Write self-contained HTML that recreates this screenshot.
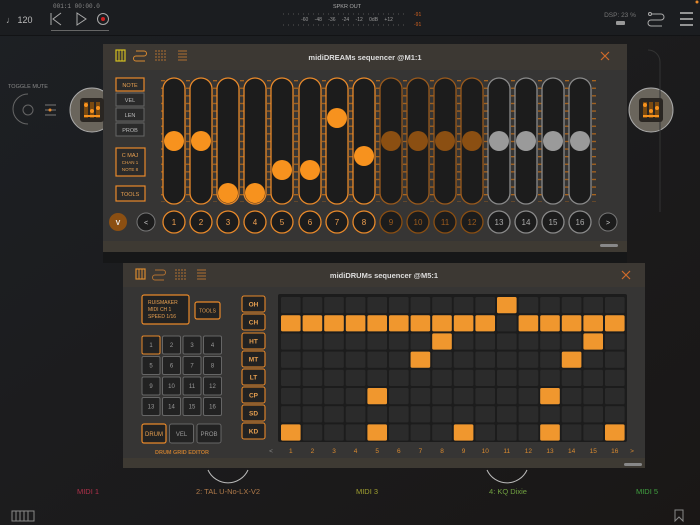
<!DOCTYPE html>
<html><head><meta charset="utf-8"><style>
html,body{margin:0;padding:0;background:#1a1c1f;}
svg{display:block;font-family:"Liberation Sans",sans-serif;}
</style></head><body>
<svg width="700" height="525" viewBox="0 0 700 525" xmlns="http://www.w3.org/2000/svg">
<defs>
<linearGradient id="bg" x1="0" y1="0" x2="1" y2="1">
<stop offset="0" stop-color="#1d2024"/><stop offset="1" stop-color="#1a1716"/></linearGradient>
<pattern id="lad" x="0" y="80" width="6" height="7.6" patternUnits="userSpaceOnUse">
<rect x="0" y="0" width="6" height="1.3" fill="#a8641e"/></pattern>
<pattern id="ladg" x="0" y="80" width="6" height="7.6" patternUnits="userSpaceOnUse">
<rect x="0" y="0" width="6" height="1.3" fill="#8a5a2a"/></pattern>
<pattern id="cells" x="280" y="296" width="21.6" height="18.2" patternUnits="userSpaceOnUse">
<rect x="1" y="1" width="19.6" height="16.2" rx="1.5" fill="#2b2b2b"/></pattern>
</defs>
<rect width="700" height="525" fill="url(#bg)"/>
<!-- top bar -->
<rect width="700" height="35" fill="#1b1d20"/>
<rect y="35" width="700" height="1" fill="#121315"/>
<text x="6" y="23" font-size="9" fill="#bbb">♩ 120</text>
<text x="53" y="8" font-size="6" fill="#888" font-family="Liberation Mono">001:1  00:00.0</text>
<path d="M51 13v12M61 13l-8 6 8 6" stroke="#aaa" fill="none" stroke-width="1"/>
<path d="M77 13v12l9-6z" stroke="#aaa" fill="none"/>
<circle cx="103" cy="19" r="5.5" stroke="#aaa" fill="none"/><circle cx="103" cy="19" r="2" fill="#d02020"/>
<rect x="51" y="30" width="58" height="1" fill="#666"/>
<text x="347" y="8" font-size="5.5" fill="#aaa" text-anchor="middle">SPKR OUT</text>
<line x1="283" y1="14" x2="407" y2="14" stroke="#555" stroke-dasharray="1 4"/>
<line x1="283" y1="25" x2="407" y2="25" stroke="#555" stroke-dasharray="1 4"/>
<text x="347" y="21" font-size="5" fill="#999" text-anchor="middle" word-spacing="5">-60 -48 -36 -24 -12 0dB +12</text>
<text x="414" y="16" font-size="5" fill="#d06020">-91</text><text x="414" y="26" font-size="5" fill="#d06020">-91</text>
<text x="620" y="17" font-size="6.5" fill="#777" text-anchor="middle">DSP: 23 %</text>
<rect x="616" y="21" width="9" height="4" rx="1" fill="#999"/>
<circle cx="697" cy="2" r="1.5" fill="#e8892a"/>
<path d="M651 14h10a3 3 0 0 1 0 6h-10a3 3 0 0 0 0 6h11" stroke="#aaa" fill="none"/><circle cx="650" cy="14" r="1.5" stroke="#aaa" fill="none"/>
<path d="M680 13h13M680 19h13M680 25h13" stroke="#bbb" stroke-width="1.5"/>
<!-- left toggle mute -->
<text x="28" y="88" font-size="5.5" fill="#888" text-anchor="middle">TOGGLE MUTE</text>
<path d="M28 94a15 15 0 0 0 0 30" stroke="#666" fill="none"/>
<circle cx="28" cy="110" r="5" stroke="#666" fill="none"/>
<path d="M45 105h11M45 110h11M45 115h11" stroke="#777"/><circle cx="50" cy="110" r="1.5" fill="#e8892a"/>
<circle cx="92" cy="110" r="22" fill="#6a655c" stroke="#aaa"/>
<circle cx="651" cy="110" r="22" fill="#6a655c" stroke="#aaa"/>
<path d="M633 25a12 12 0 0 1 0 0M648 50a12 12 0 0 1 12 12v150" stroke="#333" fill="none"/>
<!-- strip between panels -->
<rect x="103" y="252" width="524" height="11" fill="#161718"/>
<!-- PANEL 1 -->
<rect x="103" y="44" width="524" height="208" fill="#363534"/>
<rect x="103" y="44" width="524" height="26" fill="#3c3833"/>
<rect x="103" y="241" width="524" height="11" fill="#3e3a33"/>
<rect x="600" y="244" width="18" height="3" rx="1.5" fill="#888"/>
<rect x="116" y="50" width="9" height="11" fill="none" stroke="#d4c020" stroke-width="1.2"/><path d="M119 50v11M122 50v11" stroke="#d4c020"/>
<path d="M136 51h8a2.5 2.5 0 0 1 0 5h-8a2.5 2.5 0 0 0 0 5h9" stroke="#d98a30" fill="none"/>
<path d="M156 50v11M159 50v11M162 50v11M165 50v11" stroke="#b07030" stroke-dasharray="2 1"/>
<path d="M178 51h9M178 54h9M178 57h9M178 60h9" stroke="#b07030"/>
<text x="365" y="60" font-size="7.5" font-weight="bold" fill="#ddd" text-anchor="middle">midiDREAMs sequencer @M1:1</text>
<path d="M601 52l8 8M609 52l-8 8" stroke="#d06a2a" stroke-width="1.2"/>
<g font-size="5.5" text-anchor="middle" fill="#bbb">
<rect x="116" y="78" width="28" height="13" fill="#2a2a2a" stroke="#e8892a" stroke-width="1.2"/><text x="130" y="87" fill="#e8a050">NOTE</text>
<rect x="116" y="93" width="28" height="13" fill="#2a2a2a" stroke="#666"/><text x="130" y="102">VEL</text>
<rect x="116" y="108" width="28" height="13" fill="#2a2a2a" stroke="#666"/><text x="130" y="117">LEN</text>
<rect x="116" y="123" width="28" height="13" fill="#2a2a2a" stroke="#666"/><text x="130" y="132">PROB</text>
<rect x="116" y="148" width="29" height="28" fill="#2a2a2a" stroke="#e8892a" stroke-width="1.2"/>
<text x="130" y="157" fill="#e8a050">C MAJ</text><text x="130" y="164" font-size="4.5" fill="#e8a050">CHAN 1</text><text x="130" y="171" font-size="4.5" fill="#e8a050">NOTE 8</text>
<rect x="116" y="186" width="29" height="15" fill="#2a2a2a" stroke="#e8892a" stroke-width="1.2"/><text x="130" y="196" fill="#e8a050">TOOLS</text>
</g>
<!-- ladders -->
<g>
<rect x="161" y="80" width="4" height="122" fill="url(#lad)"/>
<rect x="186" y="80" width="4" height="122" fill="url(#lad)"/><rect x="213" y="80" width="4" height="122" fill="url(#lad)"/><rect x="240" y="80" width="4" height="122" fill="url(#lad)"/><rect x="267" y="80" width="4" height="122" fill="url(#lad)"/><rect x="294" y="80" width="4" height="122" fill="url(#lad)"/><rect x="322" y="80" width="4" height="122" fill="url(#lad)"/><rect x="349" y="80" width="4" height="122" fill="url(#lad)"/><rect x="376" y="80" width="4" height="122" fill="url(#lad)"/><rect x="403" y="80" width="4" height="122" fill="url(#lad)"/><rect x="430" y="80" width="4" height="122" fill="url(#lad)"/><rect x="457" y="80" width="4" height="122" fill="url(#lad)"/><rect x="484" y="80" width="4" height="122" fill="url(#lad)"/><rect x="511" y="80" width="4" height="122" fill="url(#lad)"/><rect x="538" y="80" width="4" height="122" fill="url(#lad)"/><rect x="565" y="80" width="4" height="122" fill="url(#lad)"/><rect x="592" y="80" width="4" height="122" fill="url(#lad)"/>
</g>
<g fill="#1c1c1c" stroke-width="1.3">
<g stroke="#e8892a">
<rect x="163" y="78" width="22" height="126" rx="11"/><rect x="190" y="78" width="22" height="126" rx="11"/><rect x="217" y="78" width="22" height="126" rx="11"/><rect x="244" y="78" width="22" height="126" rx="11"/><rect x="271" y="78" width="22" height="126" rx="11"/><rect x="299" y="78" width="22" height="126" rx="11"/><rect x="326" y="78" width="22" height="126" rx="11"/><rect x="353" y="78" width="22" height="126" rx="11"/>
</g>
<g stroke="#9a5a1c">
<rect x="380" y="78" width="22" height="126" rx="11"/><rect x="407" y="78" width="22" height="126" rx="11"/><rect x="434" y="78" width="22" height="126" rx="11"/><rect x="461" y="78" width="22" height="126" rx="11"/>
</g>
<g stroke="#8a8a8a">
<rect x="488" y="78" width="22" height="126" rx="11"/><rect x="515" y="78" width="22" height="126" rx="11"/><rect x="542" y="78" width="22" height="126" rx="11"/><rect x="569" y="78" width="22" height="126" rx="11"/>
</g>
</g>
<g fill="#f7921e">
<circle cx="174" cy="141" r="10"/><circle cx="201" cy="141" r="10"/><circle cx="228" cy="193" r="10"/><circle cx="255" cy="193" r="10"/><circle cx="282" cy="170" r="10"/><circle cx="310" cy="170" r="10"/><circle cx="337" cy="118" r="10"/><circle cx="364" cy="156" r="10"/>
</g>
<g fill="#8b4f12"><circle cx="391" cy="141" r="10"/><circle cx="418" cy="141" r="10"/><circle cx="445" cy="141" r="10"/><circle cx="472" cy="141" r="10"/></g>
<g fill="#9a9a9a"><circle cx="499" cy="141" r="10"/><circle cx="526" cy="141" r="10"/><circle cx="553" cy="141" r="10"/><circle cx="580" cy="141" r="10"/></g>
<circle cx="118" cy="222" r="9" fill="#8b4f12"/><text x="118" y="225" font-size="7" fill="#eee" text-anchor="middle" font-weight="bold">V</text>
<circle cx="146" cy="222" r="9" fill="#1c1c1c" stroke="#777"/><text x="146" y="225" font-size="7" fill="#ccc" text-anchor="middle">&lt;</text>
<circle cx="608" cy="222" r="9" fill="#1c1c1c" stroke="#777"/><text x="608" y="225" font-size="7" fill="#ccc" text-anchor="middle">&gt;</text>
<g font-size="8" text-anchor="middle" fill="#1c1c1c" stroke-width="1.3">
<g stroke="#e8892a"><circle cx="174" cy="222" r="11"/><circle cx="201" cy="222" r="11"/><circle cx="228" cy="222" r="11"/><circle cx="255" cy="222" r="11"/><circle cx="282" cy="222" r="11"/><circle cx="310" cy="222" r="11"/><circle cx="337" cy="222" r="11"/><circle cx="364" cy="222" r="11"/></g>
<g stroke="#8b4f12"><circle cx="391" cy="222" r="11"/><circle cx="418" cy="222" r="11"/><circle cx="445" cy="222" r="11"/><circle cx="472" cy="222" r="11"/></g>
<g stroke="#8a8a8a"><circle cx="499" cy="222" r="11"/><circle cx="526" cy="222" r="11"/><circle cx="553" cy="222" r="11"/><circle cx="580" cy="222" r="11"/></g>
</g>
<g font-size="8" text-anchor="middle">
<g fill="#f0a050"><text x="174" y="225">1</text><text x="201" y="225">2</text><text x="228" y="225">3</text><text x="255" y="225">4</text><text x="282" y="225">5</text><text x="310" y="225">6</text><text x="337" y="225">7</text><text x="364" y="225">8</text></g>
<g fill="#9a5a1c"><text x="391" y="225">9</text><text x="418" y="225">10</text><text x="445" y="225">11</text><text x="472" y="225">12</text></g>
<g fill="#aaa"><text x="499" y="225">13</text><text x="526" y="225">14</text><text x="553" y="225">15</text><text x="580" y="225">16</text></g>
</g>
<!-- icons inside side circles -->
<g transform="translate(80,98)"><rect width="24" height="24" rx="3" fill="#2a2622"/><rect x="4" y="4" width="4" height="16" fill="#7a4a10"/><rect x="10" y="4" width="4" height="16" fill="#7a4a10"/><rect x="16" y="4" width="4" height="16" fill="#7a4a10"/><circle cx="6" cy="7" r="2" fill="#f7921e"/><circle cx="12" cy="13" r="2" fill="#f7921e"/><circle cx="18" cy="10" r="2" fill="#f7921e"/><rect x="4" y="17" width="16" height="2" fill="#f7921e"/></g>
<g transform="translate(639,98)"><rect width="24" height="24" rx="3" fill="#2a2622"/><rect x="4" y="4" width="4" height="16" fill="#7a4a10"/><rect x="10" y="4" width="4" height="16" fill="#7a4a10"/><rect x="16" y="4" width="4" height="16" fill="#7a4a10"/><circle cx="6" cy="7" r="2" fill="#f7921e"/><circle cx="12" cy="13" r="2" fill="#f7921e"/><circle cx="18" cy="10" r="2" fill="#f7921e"/><rect x="4" y="17" width="16" height="2" fill="#f7921e"/></g>
<!-- PANEL 2 -->
<rect x="123" y="263" width="522" height="205" fill="#363534"/>
<rect x="123" y="263" width="522" height="24" fill="#3c3833"/>
<rect x="123" y="458" width="522" height="10" fill="#3e3a33"/>
<rect x="624" y="463" width="18" height="3" rx="1.5" fill="#888"/>
<rect x="136" y="269" width="9" height="10" fill="none" stroke="#d98a30" stroke-width="1.2"/><path d="M139 269v10M142 269v10" stroke="#d98a30"/>
<path d="M155 270h8a2.5 2.5 0 0 1 0 5h-8a2.5 2.5 0 0 0 0 5h9" stroke="#b07030" fill="none"/>
<path d="M176 269v11M179 269v11M182 269v11M185 269v11" stroke="#b07030" stroke-dasharray="2 1"/>
<path d="M197 270h9M197 273h9M197 276h9M197 279h9" stroke="#b07030"/>
<text x="384" y="278" font-size="7.5" font-weight="bold" fill="#ddd" text-anchor="middle">midiDRUMs sequencer @M5:1</text>
<path d="M622 271l8 8M630 271l-8 8" stroke="#d06a2a" stroke-width="1.2"/>
<g font-size="5" text-anchor="middle">
<rect x="142" y="295" width="47" height="29" rx="2" fill="#222" stroke="#e8892a" stroke-width="1.2"/>
<g fill="#e8a050" text-anchor="start"><text x="148" y="304">RUISMAKER</text><text x="148" y="311">MIDI CH 1</text><text x="148" y="318">SPEED 1/16</text></g>
<rect x="195" y="302" width="25" height="17" rx="2" fill="#222" stroke="#e8892a" stroke-width="1.2"/><text x="207.5" y="312.5" fill="#e8a050">TOOLS</text>
</g>
<g font-size="6" text-anchor="middle" fill="#999">
<g fill="#222" stroke="#666">
<rect x="142" y="336" width="18" height="18" rx="1.5" stroke="#e8892a"/><rect x="162.5" y="336" width="18" height="18" rx="1.5"/><rect x="183" y="336" width="18" height="18" rx="1.5"/><rect x="203.5" y="336" width="18" height="18" rx="1.5"/>
<rect x="142" y="356.5" width="18" height="18" rx="1.5"/><rect x="162.5" y="356.5" width="18" height="18" rx="1.5"/><rect x="183" y="356.5" width="18" height="18" rx="1.5"/><rect x="203.5" y="356.5" width="18" height="18" rx="1.5"/>
<rect x="142" y="377" width="18" height="18" rx="1.5"/><rect x="162.5" y="377" width="18" height="18" rx="1.5"/><rect x="183" y="377" width="18" height="18" rx="1.5"/><rect x="203.5" y="377" width="18" height="18" rx="1.5"/>
<rect x="142" y="397.5" width="18" height="18" rx="1.5"/><rect x="162.5" y="397.5" width="18" height="18" rx="1.5"/><rect x="183" y="397.5" width="18" height="18" rx="1.5"/><rect x="203.5" y="397.5" width="18" height="18" rx="1.5"/>
</g>
<text x="151" y="347">1</text><text x="171.5" y="347">2</text><text x="192" y="347">3</text><text x="212.5" y="347">4</text>
<text x="151" y="367.5">5</text><text x="171.5" y="367.5">6</text><text x="192" y="367.5">7</text><text x="212.5" y="367.5">8</text>
<text x="151" y="388">9</text><text x="171.5" y="388">10</text><text x="192" y="388">11</text><text x="212.5" y="388">12</text>
<text x="151" y="408.5">13</text><text x="171.5" y="408.5">14</text><text x="192" y="408.5">15</text><text x="212.5" y="408.5">16</text>
<rect x="142" y="424" width="24" height="19" rx="2" fill="#222" stroke="#e8892a" stroke-width="1.2"/><text x="154" y="436" fill="#e8a050">DRUM</text>
<rect x="169.5" y="424" width="24" height="19" rx="2" fill="#222" stroke="#666"/><text x="181.5" y="436">VEL</text>
<rect x="197" y="424" width="24" height="19" rx="2" fill="#222" stroke="#666"/><text x="209" y="436">PROB</text>
<text x="182" y="454" font-size="5.5" fill="#c07a30" font-weight="bold">DRUM GRID EDITOR</text>
</g>
<g font-size="6.5" text-anchor="middle" fill="#e8a050" font-weight="bold">
<g fill="#222" stroke="#e8892a" stroke-width="1.1">
<rect x="242" y="296" width="23" height="16" rx="2"/><rect x="242" y="314" width="23" height="16" rx="2"/><rect x="242" y="333" width="23" height="16" rx="2"/><rect x="242" y="351" width="23" height="16" rx="2"/><rect x="242" y="369" width="23" height="16" rx="2"/><rect x="242" y="387" width="23" height="16" rx="2"/><rect x="242" y="405" width="23" height="16" rx="2"/><rect x="242" y="423" width="23" height="16" rx="2"/>
</g>
<text x="253.5" y="306.5">OH</text><text x="253.5" y="324.5">CH</text><text x="253.5" y="343.5">HT</text><text x="253.5" y="361.5">MT</text><text x="253.5" y="379.5">LT</text><text x="253.5" y="397.5">CP</text><text x="253.5" y="415.5">SD</text><text x="253.5" y="433.5">KD</text>
</g>
<rect x="278" y="294" width="349" height="148" rx="2" fill="#1c1c1c"/>
<rect x="280" y="296" width="345.6" height="145.6" fill="url(#cells)"/>
<g fill="#f0972e">
<rect x="497" y="297" width="19.6" height="16.2" rx="1.5"/>
<rect x="281" y="315.2" width="19.6" height="16.2" rx="1.5"/><rect x="302.6" y="315.2" width="19.6" height="16.2" rx="1.5"/><rect x="324.2" y="315.2" width="19.6" height="16.2" rx="1.5"/><rect x="345.8" y="315.2" width="19.6" height="16.2" rx="1.5"/><rect x="367.4" y="315.2" width="19.6" height="16.2" rx="1.5"/><rect x="389" y="315.2" width="19.6" height="16.2" rx="1.5"/><rect x="410.6" y="315.2" width="19.6" height="16.2" rx="1.5"/><rect x="432.2" y="315.2" width="19.6" height="16.2" rx="1.5"/><rect x="453.8" y="315.2" width="19.6" height="16.2" rx="1.5"/><rect x="475.4" y="315.2" width="19.6" height="16.2" rx="1.5"/><rect x="518.6" y="315.2" width="19.6" height="16.2" rx="1.5"/><rect x="540.2" y="315.2" width="19.6" height="16.2" rx="1.5"/><rect x="561.8" y="315.2" width="19.6" height="16.2" rx="1.5"/><rect x="583.4" y="315.2" width="19.6" height="16.2" rx="1.5"/><rect x="605" y="315.2" width="19.6" height="16.2" rx="1.5"/>
<rect x="432.2" y="333.4" width="19.6" height="16.2" rx="1.5"/><rect x="583.4" y="333.4" width="19.6" height="16.2" rx="1.5"/>
<rect x="410.6" y="351.6" width="19.6" height="16.2" rx="1.5"/><rect x="561.8" y="351.6" width="19.6" height="16.2" rx="1.5"/>
<rect x="367.4" y="388" width="19.6" height="16.2" rx="1.5"/><rect x="540.2" y="388" width="19.6" height="16.2" rx="1.5"/>
<rect x="281" y="424.4" width="19.6" height="16.2" rx="1.5"/><rect x="367.4" y="424.4" width="19.6" height="16.2" rx="1.5"/><rect x="453.8" y="424.4" width="19.6" height="16.2" rx="1.5"/><rect x="540.2" y="424.4" width="19.6" height="16.2" rx="1.5"/><rect x="605" y="424.4" width="19.6" height="16.2" rx="1.5"/>
</g>
<g font-size="6.5" text-anchor="middle" fill="#d98a30">
<text x="271" y="453" fill="#888">&lt;</text>
<text x="290.8" y="453">1</text><text x="312.4" y="453">2</text><text x="334" y="453">3</text><text x="355.6" y="453">4</text><text x="377.2" y="453">5</text><text x="398.8" y="453">6</text><text x="420.4" y="453">7</text><text x="442" y="453">8</text><text x="463.6" y="453">9</text><text x="485.2" y="453">10</text><text x="506.8" y="453">11</text><text x="528.4" y="453">12</text><text x="550" y="453">13</text><text x="571.6" y="453">14</text><text x="593.2" y="453">15</text><text x="614.8" y="453">16</text><text x="632" y="453">&gt;</text>
</g>
<!-- bottom -->
<path d="M208 470a22 22 0 0 0 40 0M487 470a22 22 0 0 0 40 0" stroke="#bbb" fill="none"/>
<g font-size="7.5" text-anchor="middle">
<text x="88" y="494" fill="#b0304a">MIDI 1</text>
<text x="228" y="494" fill="#b07a4a">2: TAL U-No-LX-V2</text>
<text x="367" y="494" fill="#a0a030">MIDI 3</text>
<text x="508" y="494" fill="#70a040">4: KQ Dixie</text>
<text x="647" y="494" fill="#40a040">MIDI 5</text>
</g>
<rect x="12" y="511" width="22" height="10" fill="none" stroke="#888"/><path d="M16 511v10M20 511v10M24 511v10M28 511v10" stroke="#888"/>
<path d="M675 510h8v11l-4-4-4 4z" fill="none" stroke="#888"/>
</svg>
</body></html>
